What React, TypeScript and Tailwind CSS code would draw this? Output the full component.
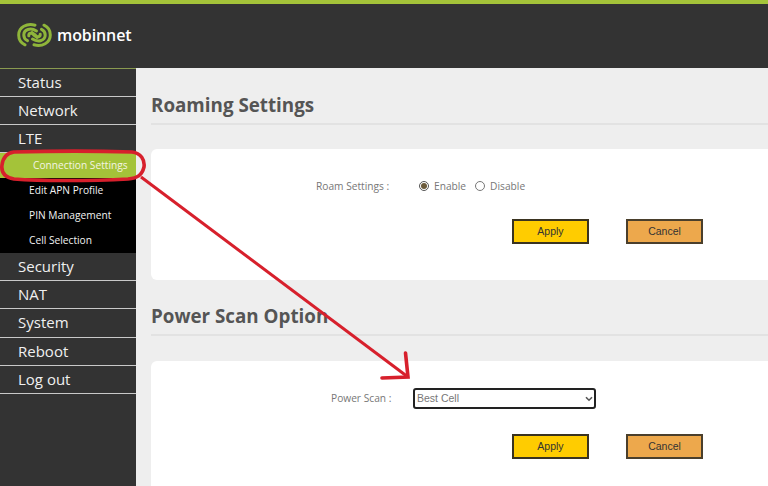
import React from "react";

const font = { fontFamily: '"Open Sans", "Noto Sans", sans-serif' };

function Logo() {
  const half = (
    <g>
      <path d="M18 2.2 C10 0 1.7 4 1.7 12 C1.7 16.5 4 20 8 21.8" />
      <path d="M19.5 8 C13.5 4.2 6.8 6.5 6.8 12 C6.8 14.5 8 16.5 10.5 17.6" />
      <path d="M11.8 12.8 C11.5 10 14.5 9.5 17 11 C18.5 12 19 13 20 14.5" />
    </g>
  );
  return (
    <svg width="35" height="24" viewBox="0 0 35 24" fill="none" stroke="#8fb53a" strokeWidth="3" strokeLinecap="round">
      {half}
      <g transform="rotate(180 17.5 12)">{half}</g>
    </svg>
  );
}

function MainItem({ label, h = "h-[28.2px]" }: { label: string; h?: string }) {
  return (
    <div className={`${h} border-b border-[#c9c9c9] pl-[18px] text-[15px] leading-[27px] text-[#f0f0f0]`}>
      {label}
    </div>
  );
}

function SubItem({ label }: { label: string }) {
  return <div className="h-[25px] pl-[29px] text-[10.2px] leading-[24px] text-[#f2f2f2]">{label}</div>;
}

function Buttons() {
  return (
    <div className="flex gap-[37px] pl-[361px]">
      <button className="h-[25px] w-[77px] border-2 border-[#3a3320] bg-[#ffcc00] text-[10.5px] text-[#333] [font-family:'Liberation_Sans',sans-serif]">
        Apply
      </button>
      <button className="h-[25px] w-[77px] border-2 border-[#4a3f2c] bg-[#eda84c] text-[10.5px] text-[#333] [font-family:'Liberation_Sans',sans-serif]">
        Cancel
      </button>
    </div>
  );
}

function Heading({ children }: { children: React.ReactNode }) {
  return (
    <div className="h-[34px] border-b-2 border-[#e2e2e2] text-[18.8px] font-bold leading-[28px] text-[#555]">
      {children}
    </div>
  );
}

export default function App() {
  return (
    <div className="relative h-[486px] w-[768px] overflow-hidden bg-[#eeeeee]" style={font}>
      <div className="h-[4px] bg-[#a4c339]" />
      <div className="flex h-[64px] items-center gap-[5px] bg-[#333333] pb-[2px] pl-[17px]">
        <Logo />
        <span className="text-[16px] font-semibold tracking-[-0.1px] text-white">mobinnet</span>
      </div>
      <div className="flex h-[418px]">
        <aside className="w-[136px] shrink-0 border-t border-[#8a9a50] bg-[#333333]">
          <MainItem label="Status" h="h-[28px]" />
          <MainItem label="Network" h="h-[28px]" />
          <MainItem label="LTE" h="h-[28px]" />
          <div className="bg-black">
            <div className="h-[25px] bg-[#a4c339] pl-[33px] text-[10.2px] leading-[24px] text-[#f4f4e4]">
              Connection Settings
            </div>
            <SubItem label="Edit APN Profile" />
            <SubItem label="PIN Management" />
            <SubItem label="Cell Selection" />
          </div>
          <MainItem label="Security" />
          <MainItem label="NAT" />
          <MainItem label="System" />
          <MainItem label="Reboot" />
          <MainItem label="Log out" />
        </aside>
        <main className="flex-1 pl-[15px] pt-[23px]">
          <Heading>Roaming Settings</Heading>
          <section className="mt-[24px] h-[131px] rounded-l-[6px] bg-white pt-[30px]">
            <div className="flex items-center text-[10.2px] leading-[14px] text-[#777]">
              <span className="ml-[165px] w-[103px]">Roam Settings :</span>
              <span className="flex h-[10px] w-[10px] items-center justify-center rounded-full border border-[#555]">
                <span className="h-[6px] w-[6px] rounded-full bg-[#6b5a3a]" />
              </span>
              <span className="ml-[5px]">Enable</span>
              <span className="ml-[9px] h-[10px] w-[10px] rounded-full border border-[#777] bg-white" />
              <span className="ml-[5px]">Disable</span>
            </div>
            <div className="mt-[26px]">
              <Buttons />
            </div>
          </section>
          <div className="mt-[22px]">
            <Heading>Power Scan Option</Heading>
          </div>
          <section className="mt-[25px] h-[130px] rounded-l-[6px] bg-white pt-[27px]">
            <div className="flex items-center text-[10.2px] text-[#777]">
              <span className="ml-[180px] w-[82px]">Power Scan :</span>
              <div className="relative h-[21px] w-[183px]">
                <select
                  defaultValue="Best Cell"
                  className="h-full w-full appearance-none rounded-[3px] border-2 border-[#222] bg-white pl-[2px] text-[10.5px] text-[#777] [font-family:'Liberation_Sans',sans-serif]"
                >
                  <option>Best Cell</option>
                </select>
                <svg className="pointer-events-none absolute right-[3px] top-[7.5px]" width="8" height="6" viewBox="0 0 8 6" fill="none">
                  <path d="M1 1.2 L4 4.2 L7 1.2" stroke="#555" strokeWidth="1.6" />
                </svg>
              </div>
            </div>
            <div className="mt-[25px]">
              <Buttons />
            </div>
          </section>
        </main>
      </div>
      <svg className="pointer-events-none absolute left-0 top-0" width="768" height="486" fill="none">
        <path
          d="M14 152 C50 151 100 151 132 152 C141 153 145 160 144 167 C142 175 138 178 128 179 C90 181 40 181 14 179 C4 177 1 172 2 165 C3 157 7 153 14 152 Z"
          stroke="#d7202c"
          strokeWidth="3.6"
        />
        <path d="M141 177 L408 377" stroke="#d7202c" strokeWidth="3" />
        <path d="M382 378 L408 377 L405.5 353" stroke="#d7202c" strokeWidth="3.6" strokeLinecap="round" />
      </svg>
    </div>
  );
}
